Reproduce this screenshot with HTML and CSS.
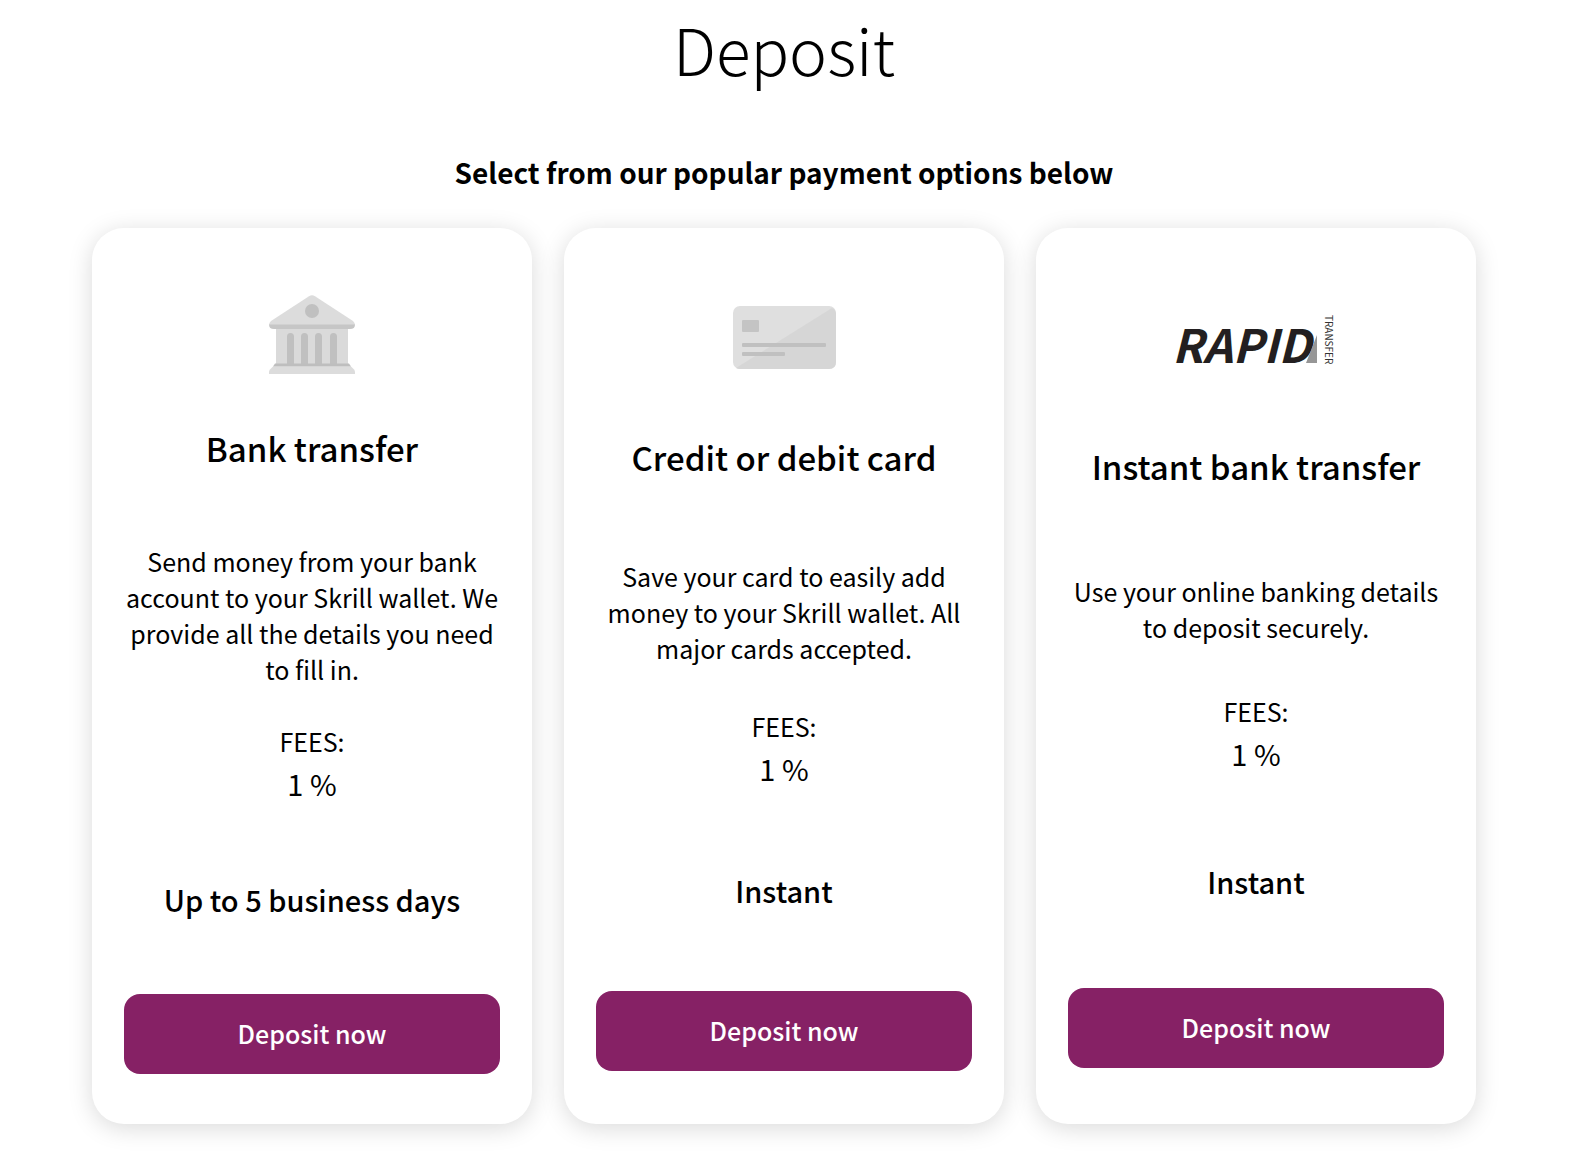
FILE: index.html
```
<!DOCTYPE html>
<html lang="en">
<head>
    <meta charset="UTF-8">
    <meta name="viewport" content="width=device-width, initial-scale=1.0">
    <title>Deposit</title>
    <link rel="stylesheet" href="styles.css">
</head>
<body>

<main class="deposit">
    <h1>Deposit</h1>
    <h2>Select from our popular payment options below</h2>

    <div class="options">
        <section class="card">
            <div class="card-icon">
                <svg width="86" height="80" viewBox="0 0 86 80" aria-hidden="true">
                    <path d="M7 32h72v38H7z" fill="#dadada"/>
                    <path d="M40 1.200Q43-.5 46 1.200L84 26Q86 28 86 30H0Q0 28 2 26z" fill="#dcdcdc"/>
                    <path d="M0 29.500h86Q86 34 81 34H5Q0 34 0 29.500z" fill="#c6c6c6"/>
                    <circle cx="43" cy="16" r="7" fill="#c0c0c0"/>
                    <path d="M18 69V41.500a3.500 3.500 0 0 1 7 0V69zM32 69V41.500a3.500 3.500 0 0 1 7 0V69zM46 69V41.500a3.500 3.500 0 0 1 7 0V69zM61 69V41.500a3.500 3.500 0 0 1 7 0V69z" fill="#c0c0c0"/>
                    <path d="M4 71.500h78l3 3q1 1 1 3V79H0v-2q0-1.500 1-2.500z" fill="#dcdcdc"/>
                    <path d="M6 68.500h74l2 3H4z" fill="#bebebe"/>
                </svg>
            </div>
            <h3>Bank transfer</h3>
            <p class="description">Send money from your bank account to your Skrill wallet. We provide all the details you need to fill in.</p>
            <div class="fees">
                <p class="fees-label">FEES:</p>
                <p class="fees-value">1 %</p>
            </div>
            <p class="time">Up to 5 business days</p>
            <button type="button">Deposit now</button>
        </section>

        <section class="card">
            <div class="card-icon">
                <svg width="103" height="63" viewBox="0 0 103 63" aria-hidden="true">
                    <rect width="103" height="63" rx="7" fill="#dfdfdf"/>
                    <path d="M99 2q4 2 4 6v48q0 7-7 7H7q-2 0-4-1z" fill="#d6d6d6"/>
                    <rect x="9" y="14" width="17" height="12" rx="1" fill="#c4c4c4"/>
                    <rect x="9" y="37" width="84" height="4" rx="1" fill="#c0c0c0"/>
                    <rect x="9" y="46" width="43" height="4" rx="1" fill="#c0c0c0"/>
                </svg>
            </div>
            <h3>Credit or debit card</h3>
            <p class="description">Save your card to easily add money to your Skrill wallet. All major cards accepted.</p>
            <div class="fees">
                <p class="fees-label">FEES:</p>
                <p class="fees-value">1 %</p>
            </div>
            <p class="time">Instant</p>
            <button type="button">Deposit now</button>
        </section>

        <section class="card">
            <div class="card-icon">
                <svg class="rapid" width="160" height="48" viewBox="0 0 160 48" role="img" aria-label="Rapid Transfer">
                    <text class="rapid-name" x="-4" y="46">RAPID</text>
                    <path d="M141 18v28h-11z" fill="#969696"/>
                    <text class="rapid-sub" transform="translate(149 -2) rotate(90)">TRANSFER</text>
                </svg>
            </div>
            <h3>Instant bank transfer</h3>
            <p class="description">Use your online banking details to deposit securely.</p>
            <div class="fees">
                <p class="fees-label">FEES:</p>
                <p class="fees-value">1 %</p>
            </div>
            <p class="time">Instant</p>
            <button type="button">Deposit now</button>
        </section>
    </div>
</main>

</body>
</html>
```
FILE: styles.css
```
* {
    box-sizing: border-box;
}
body {
    margin: 0;
    padding-right: 14px;
    background-color: #fff;
    color: #000;
    font-family: "Noto Sans CJK SC", "Noto Sans", sans-serif;
}
h1, h2, h3, p {
    margin: 0;
    text-align: center;
}
h1 {
    padding-top: 4px;
    font-size: 64px;
    font-weight: 300;
    line-height: 88px;
}
h2 {
    margin: 60px 0 36px;
    font-size: 28px;
    font-weight: 700;
    line-height: 40px;
}
h3 {
    padding-bottom: 35px;
    font-size: 33px;
    font-weight: 500;
    line-height: 48px;
}
.deposit {
    max-width: 1384px;
    margin: 0 auto;
    padding-bottom: 32px;
}
.options {
    display: grid;
    grid-template-columns: repeat(3, 1fr);
    gap: 32px;
}
.card {
    display: flex;
    flex-direction: column;
    justify-content: space-around;
    min-height: 896px;
    padding: 32px;
    border-radius: 32px;
    background-color: #fff;
    box-shadow: 0 4px 24px rgba(0, 0, 0, 0.15);
}
.card-icon {
    display: flex;
    align-items: center;
    justify-content: center;
    height: 110px;
    padding-top: 3px;
}
.description, .fees-label {
    font-size: 25px;
    line-height: 36px;
}
.fees-value {
    font-size: 29px;
    line-height: 48px;
}
.time {
    padding: 35px 0 38px;
    font-size: 29px;
    font-weight: 500;
    line-height: 42px;
}
button {
    width: 100%;
    height: 80px;
    padding: 0 0 2px;
    border: none;
    border-radius: 16px;
    background-color: #862165;
    color: #fff;
    font-family: inherit;
    font-size: 25px;
    font-weight: 500;
    cursor: pointer;
}
button:hover {
    background-color: #6c1a51;
}
.rapid {
    overflow: visible;
}
.rapid-name {
    fill: #231f20;
    font-size: 46px;
    font-style: italic;
    font-weight: 700;
}
.rapid-sub {
    fill: #333;
    font-size: 10px;
    font-weight: 400;
}
```
